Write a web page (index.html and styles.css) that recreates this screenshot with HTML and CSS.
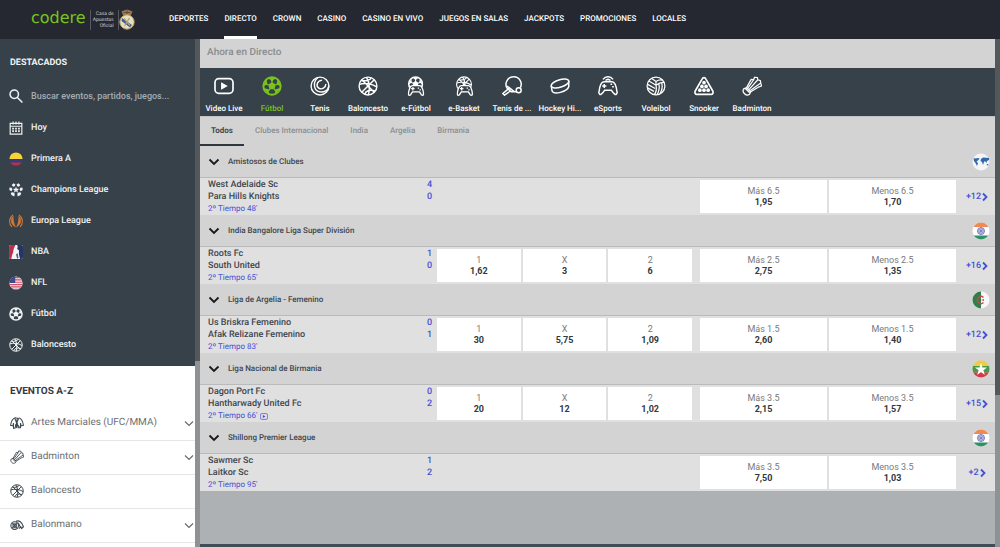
FILE: index.html
```html
<!DOCTYPE html>
<html lang="es">
<head>
<meta charset="utf-8">
<meta name="viewport" content="width=device-width, initial-scale=1">
<title>Codere - Directo</title>
<link rel="stylesheet" href="styles.css">
</head>
<body>
<svg class="sprite" aria-hidden="true">
  <symbol id="ball" viewBox="0 0 24 24"><circle cx="12" cy="12" r="10.4" fill="none" stroke="currentColor" stroke-width="2.400"/><path d="M12 7.200l4.600 3.300-1.800 5.400H9.200l-1.800-5.400z" fill="currentColor"/><path d="M12 8V3M16 10.700l5-1.700M14.500 15.500l3 4M9.500 15.500l-3 4M8 10.700L3 9" stroke="currentColor" stroke-width="1.500"/><path d="M7 2h10l-5 4.500zM18.500 4l4.500 9-5.500-3zM22.500 14.500l-7 8 .5-6.500zM1.500 14.500l7 8-.5-6.500zM5.500 4L1 13l5.500-3z" fill="currentColor"/></symbol>
  <symbol id="basket" viewBox="0 0 24 24"><g fill="none" stroke="currentColor" stroke-width="1.700"><circle cx="12" cy="12" r="10.700"/><path d="M4.500 4.500l15 15M19.500 4.500l-15 15M10 1.500c4 6 4 15 2.500 21M1.500 10c6-2 15-1 21 3M4 5.500c6 1 11-1 12-3.500M8 22c1-4 6-6 12.500-4"/></g></symbol>
  <symbol id="shuttle" viewBox="0 0 24 24"><g fill="none" stroke="currentColor" stroke-width="1.500" stroke-linejoin="round"><path d="M5.500 14L11 4l3 .5L15 1.500l3.500.5.500 2.500 3 1 .5 3 1 3.500-3 1L10.500 19z"/><path d="M7 14.500L14 4.500M8.500 16L19 4.500M10 17.500L22.500 8.500"/><path d="M5.500 14l5 5-1.500 3c-4 3-9.500-2.500-7-6.500zM4 15l5 5"/></g></symbol>
  <symbol id="pad" viewBox="0 0 24 24"><path d="M7 9h10c3 0 5 4 6 12 0 2.500-3 2.500-4 0l-2-3H7l-2 3c-1 2.500-4 2.500-4 0C2 13 4 9 7 9z" stroke="currentColor" stroke-width="2"/><path d="M5 13.500h5M7.500 11v5M14.500 12.500h2M17 15h2" stroke="currentColor" stroke-width="1.800"/></symbol>
  <symbol id="down" viewBox="0 0 12 12"><path d="M1.500 3.500L6 8l4.500-4.500" fill="none" stroke="currentColor" stroke-width="1.800"/></symbol>
  <symbol id="thin-down" viewBox="0 0 12 12"><path d="M2 4.500l4 4 4-4" fill="none" stroke="currentColor" stroke-width="1.100"/></symbol>
  <symbol id="right" viewBox="0 0 8 10"><path d="M2 1.500L5.500 5 2 8.500" fill="none" stroke="currentColor" stroke-width="1.800"/></symbol>
  <symbol id="play" viewBox="0 0 24 20"><rect x="1.200" y="1.200" width="21.600" height="17.600" rx="4.500" fill="none" stroke="currentColor" stroke-width="2"/><path d="M8.500 5.500v9l8-4.500z" fill="currentColor"/></symbol>
  <symbol id="india" viewBox="0 0 18 18"><clipPath id="round"><circle cx="9" cy="9" r="8.500"/></clipPath><g clip-path="url(#round)"><path fill="#fff" d="M0 0h18v18H0z"/><path fill="#f08a50" d="M0 0h18v5H0z"/><path fill="#2f9264" d="M0 13.500h18V18H0z"/></g><circle cx="9" cy="9" r="3.500" fill="#c9cbea" stroke="#6468b0" stroke-width=".8"/><path d="M9 5.500v7M5.500 9h7M6.500 6.500l5 5M11.500 6.500l-5 5" stroke="#6468b0" stroke-width=".5"/></symbol>
</svg>

<header class="topbar">
  <a class="brand" href="#">
    <span class="brand-name">codere</span>
    <span class="brand-note">Casa de<br>Apuestas<br>Oficial</span>
    <svg class="crest" viewBox="0 0 16 21" aria-hidden="true"><path d="M4 6L2.500 2.500 5 1.500 8 .5l3 1 2.500 1L12 6z" fill="#9a7b48"/><path d="M4.500 3.500h7M8 1v4" stroke="#56404a" stroke-width=".8"/><circle cx="8" cy="13" r="7.200" fill="#e5dfc0" stroke="#b99b58" stroke-width="1"/><path d="M3 9l10 7-2 2.500L2.500 12z" fill="#3b5ca0"/><path d="M5 9.500l6 7M10.500 9l-5 8" stroke="#b4a06a" stroke-width="1.300"/></svg>
  </a>
  <nav class="mainnav">
    <a href="#">Deportes</a><a href="#" class="active">Directo</a><a href="#">Crown</a><a href="#">Casino</a><a href="#">Casino en vivo</a><a href="#">Juegos en salas</a><a href="#">Jackpots</a><a href="#">Promociones</a><a href="#">Locales</a>
  </nav>
</header>

<div class="layout">
  <aside class="sidebar">
    <section class="featured">
      <h2>DESTACADOS</h2>
      <label class="search"><svg class="side-icon" viewBox="0 0 24 24" role="img" aria-label="Buscar"><g fill="none" stroke="currentColor" stroke-width="2.600"><circle cx="9" cy="9" r="7.200"/><path d="M14 14l9 9"/></g></svg><input type="search" placeholder="Buscar eventos, partidos, juegos..."></label>
      <ul>
        <li><a href="#"><svg class="side-icon" viewBox="0 0 24 24"><path d="M2 4h20v18.500H2zM2 9h20M7 1v5M12 1v5M17 1v5" fill="none" stroke="currentColor" stroke-width="2"/><path d="M5.500 13h13M5.500 17.500h13" stroke="currentColor" stroke-width="3" stroke-dasharray="3 2"/></svg>Hoy</a></li>
        <li><a href="#"><svg class="side-icon" viewBox="0 0 18 18"><g clip-path="url(#round)"><path fill="#f8d238" d="M0 0h18v9H0z"/><path fill="#303c88" d="M0 9h18v4.500H0z"/><path fill="#b93348" d="M0 13.500h18V18H0z"/></g></svg>Primera A</a></li>
        <li><a href="#"><svg class="side-icon" viewBox="0 0 24 24" fill="currentColor"><path d="M12 6l1.500 4h4l-3 2.500 1 4-3.500-2.300L8.500 16.500l1-4-3-2.500h4z"/><path d="M8 .5l3 2-1 3-3 1-2.500-3zM16 .5l3.500 3-2.500 3-3-1-1-3zM1 7.500l3.500.5 1.500 3-2 3-3.500-2zM23 7.500l-3.500.5-1.500 3 2 3 3.500-2zM3 16.500l4-.5 3 2.500L9 23l-5-2.500zM21 16.500l-4-.5-3 2.500 1 4.500 5-2.500z"/></svg>Champions League</a></li>
        <li><a href="#"><svg class="side-icon europa" viewBox="0 0 24 24"><path d="M7 1.500C0 6-1 16 5 22M17 1.500c7 4.500 8 14.500 2 20.500" fill="none" stroke="currentColor" stroke-width="1.800"/><path d="M7 4c0 7 1 12 4 18C3 18 2 10 7 4zM17 4c0 7-1 12-4 18 8-4 9-12 4-18z" fill="currentColor" stroke="currentColor"/></svg>Europa League</a></li>
        <li><a href="#"><svg class="side-icon" viewBox="0 0 24 24"><rect width="24" height="24" rx="3" fill="#f5f5f8"/><path d="M3 0h8L8 7l-1 6-2 5-1 6H3a3 3 0 0 1-3-3V3a3 3 0 0 1 3-3z" fill="#b83148"/><path d="M14 0h7a3 3 0 0 1 3 3v18a3 3 0 0 1-3 3h-2l-2-8V9l-3-2 1-4z" fill="#263566"/><path d="M12 16l3-2 1 7-2 3z" fill="#56617f"/></svg>NBA</a></li>
        <li><a href="#"><svg class="side-icon" viewBox="0 0 18 18"><g clip-path="url(#round)"><path fill="#f2e9ed" d="M0 0h18v18H0z"/><path d="M0 2h18M0 5h18M0 8h18M0 11h18M0 14h18M0 17h18" stroke="#cd5269" stroke-width="1.500"/><path fill="#3d4c8c" d="M0 0h8v9H0z"/></g></svg>NFL</a></li>
        <li><a href="#"><svg class="side-icon"><use href="#ball"/></svg>Fútbol</a></li>
        <li><a href="#"><svg class="side-icon"><use href="#basket"/></svg>Baloncesto</a></li>
      </ul>
    </section>
    <section class="events-az">
      <h2>EVENTOS A-Z</h2>
      <ul>
        <li><a href="#"><svg class="side-icon" viewBox="0 0 24 24"><path d="M9 3C5 4 2 9 1 16l4 1 1-5v9l5-1V9l2-5zM15 3c4 1 7 6 8 13l-4 1-1-5v8h-4l-3-11" fill="none" stroke="currentColor" stroke-width="1.800"/><path d="M8 4l6 13M15 4l-4 9M10 14l-1 6M12 14l4 5" stroke="currentColor" stroke-width="1.800"/></svg><span>Artes Marciales (UFC/MMA)</span><svg class="expand"><use href="#thin-down"/></svg></a></li>
        <li><a href="#"><svg class="side-icon"><use href="#shuttle"/></svg><span>Badminton</span><svg class="expand"><use href="#thin-down"/></svg></a></li>
        <li><a href="#"><svg class="side-icon"><use href="#basket"/></svg><span>Baloncesto</span></a></li>
        <li><a href="#"><svg class="side-icon" viewBox="0 0 24 24"><g fill="none" stroke="currentColor" stroke-width="1.900"><circle cx="8" cy="13" r="6.500"/><circle cx="8" cy="13" r="3"/><path d="M10 6c5-3 11 1 13 9l-3 3-2-4M14 8l4 8-3 2M4 9l8 8M12 9l-8 8"/></g></svg><span>Balonmano</span><svg class="expand"><use href="#thin-down"/></svg></a></li>
      </ul>
    </section>
  </aside>
  <div class="scroll"><div class="thumb thumb-side"></div></div>

  <main class="content">
    <h1>Ahora en Directo</h1>
    <nav class="sports">
      <a href="#"><svg><use href="#play"/></svg>Video Live</a>
      <a href="#" class="active"><svg><use href="#ball"/></svg>Fútbol</a>
      <a href="#"><svg viewBox="0 0 24 24"><g fill="none" stroke="currentColor" stroke-width="1.700"><circle cx="12" cy="12" r="10.700"/><path d="M10 1.500C3.500 6 4 16 10 18.500c6 2 12-1 12.500-6.500M14.500 5C8 6 7 12 10.500 14.500 14 17 19 14 19 9.500"/></g></svg>Tenis</a>
      <a href="#"><svg><use href="#basket"/></svg>Baloncesto</a>
      <a href="#"><svg viewBox="0 0 24 24"><use href="#ball" x="2" y="0" width="19" height="19"/><use href="#pad" class="pad" x="2" y="4" width="20" height="20"/></svg>e-Fútbol</a>
      <a href="#"><svg viewBox="0 0 24 24"><use href="#basket" x="2" y="0" width="20" height="20"/><use href="#pad" class="pad" x="3" y="4" width="20" height="20"/></svg>e-Basket</a>
      <a href="#"><svg viewBox="0 0 24 24"><g fill="none" stroke="currentColor" stroke-width="1.800"><path d="M7 16C2 10 6 1 14 1c7 0 11 7 8 13M7 16l-6 5 2 2 7-5M7 15l4 4h6M6 12l9 7"/><circle cx="20" cy="17" r="3"/></g></svg>Tenis de ...</a>
      <a href="#"><svg viewBox="0 0 24 24"><g fill="none" stroke="currentColor" stroke-width="1.800"><ellipse cx="12" cy="9" rx="11" ry="4.500" transform="rotate(-17 12 9)"/><path d="M1.500 12l1 6c2 5 18 1 20-5l0-7"/></g></svg>Hockey Hi...</a>
      <a href="#"><svg viewBox="0 0 24 24"><path d="M7 7h10c3 0 5 5 6 13-1 4-4 2-7-3H8c-3 5-6 7-7 3C2 12 4 7 7 7zM6 4c3-4 9-4 12 0M9 5.500c2-2 4-2 6 0" fill="none" stroke="currentColor" stroke-width="1.800"/><path d="M5 12h5M7.500 9.500v5M15 10h2M17 13h2" stroke="currentColor" stroke-width="1.800"/></svg>eSports</a>
      <a href="#"><svg viewBox="0 0 24 24"><g fill="none" stroke="currentColor" stroke-width="1.500"><circle cx="12" cy="12" r="10.700"/><path d="M12 11L3.500 6M12 11c4-3 7-4 10.500-3M12 11c1 5 0 9-2 11.500M2 10l9 5M1.500 14l8 4.500M7 3l5 3.500c3-2 5-2.500 8-1.500M12 6.500V11M15.500 9.500c1 5 0 9-2 12.500M19 8.500c1 5 0 9-2 12"/></g></svg>Voleibol</a>
      <a href="#"><svg viewBox="0 0 24 24"><path d="M12 2c1 0 2 1 2.500 2l8 14c1 2 0 4-2 4h-17c-2 0-3-2-2-4l8-14C10 3 11 2 12 2z" fill="none" stroke="currentColor" stroke-width="2"/><g fill="currentColor"><circle cx="12" cy="8" r="2.200"/><circle cx="9.500" cy="12.500" r="2.200"/><circle cx="14.500" cy="12.500" r="2.200"/><circle cx="7" cy="17" r="2.200"/><circle cx="12" cy="17" r="2.200"/><circle cx="17" cy="17" r="2.200"/></g></svg>Snooker</a>
      <a href="#"><svg><use href="#shuttle"/></svg>Badminton</a>
    </nav>
    <nav class="tabs"><a href="#" class="active">Todos</a><a href="#">Clubes Internacional</a><a href="#">India</a><a href="#">Argelia</a><a href="#">Birmania</a></nav>

    <section class="league">
      <h2><svg class="fold"><use href="#down"/></svg>Amistosos de Clubes<svg class="flag" viewBox="0 0 18 18"><circle cx="9" cy="9" r="8.500" fill="#f3f5f6"/><path d="M1.500 5.500l6-.5-1 2-2 1.500L6 10l-1 3-1.500-3L2 8zM9 6l2-1.500 6 .5v2l-2 1-.5 2-1.500-2-1 1-1 3-1-3-1.500-1zM14.500 11l2 0-.5 2z" fill="#3468a8"/></svg></h2>
      <div class="event">
        <div class="match"><div class="team">West Adelaide Sc<b>4</b></div><div class="team">Para Hills Knights<b>0</b></div><div class="clock">2º Tiempo 48'</div></div>
        <div class="odds result"></div>
        <div class="odds total"><button>Más 6.5<b>1,95</b></button><button>Menos 6.5<b>1,70</b></button></div>
        <a class="more" href="#">+12<svg><use href="#right"/></svg></a>
      </div>
    </section>
    <section class="league">
      <h2><svg class="fold"><use href="#down"/></svg>India Bangalore Liga Super División<svg class="flag"><use href="#india"/></svg></h2>
      <div class="event">
        <div class="match"><div class="team">Roots Fc<b>1</b></div><div class="team">South United<b>0</b></div><div class="clock">2º Tiempo 65'</div></div>
        <div class="odds result"><button>1<b>1,62</b></button><button>X<b>3</b></button><button>2<b>6</b></button></div>
        <div class="odds total"><button>Más 2.5<b>2,75</b></button><button>Menos 2.5<b>1,35</b></button></div>
        <a class="more" href="#">+16<svg><use href="#right"/></svg></a>
      </div>
    </section>
    <section class="league">
      <h2><svg class="fold"><use href="#down"/></svg>Liga de Argelia - Femenino<svg class="flag" viewBox="0 0 18 18"><g clip-path="url(#round)"><path fill="#f8f8f8" d="M0 0h18v18H0z"/><path fill="#2f8048" d="M0 0h9v18H0z"/></g><path d="M11.500 6.500a3.500 3.500 0 1 0 0 5" fill="none" stroke="#cf4550" stroke-width="1.300"/><path d="M9 9l3-1v2z" fill="#cf4550"/></svg></h2>
      <div class="event">
        <div class="match"><div class="team">Us Briskra Femenino<b>0</b></div><div class="team">Afak Relizane Femenino<b>1</b></div><div class="clock">2º Tiempo 83'</div></div>
        <div class="odds result"><button>1<b>30</b></button><button>X<b>5,75</b></button><button>2<b>1,09</b></button></div>
        <div class="odds total"><button>Más 1.5<b>2,60</b></button><button>Menos 1.5<b>1,40</b></button></div>
        <a class="more" href="#">+12<svg><use href="#right"/></svg></a>
      </div>
    </section>
    <section class="league">
      <h2><svg class="fold"><use href="#down"/></svg>Liga Nacional de Birmania<svg class="flag" viewBox="0 0 18 18"><g clip-path="url(#round)"><path fill="#f3cb3c" d="M0 0h18v6H0z"/><path fill="#459c49" d="M0 6h18v6.500H0z"/><path fill="#d8374a" d="M0 12.500h18V18H0z"/></g><path d="M9 3l1.500 4.500h4.500l-3.600 2.700L12.800 15 9 12l-3.800 3 1.400-4.800L3 7.500h4.500z" fill="#fff"/></svg></h2>
      <div class="event">
        <div class="match"><div class="team">Dagon Port Fc<b>0</b></div><div class="team">Hantharwady United Fc<b>2</b></div><div class="clock">2º Tiempo 66'<svg class="live"><use href="#play"/></svg></div></div>
        <div class="odds result"><button>1<b>20</b></button><button>X<b>12</b></button><button>2<b>1,02</b></button></div>
        <div class="odds total"><button>Más 3.5<b>2,15</b></button><button>Menos 3.5<b>1,57</b></button></div>
        <a class="more" href="#">+15<svg><use href="#right"/></svg></a>
      </div>
    </section>
    <section class="league">
      <h2><svg class="fold"><use href="#down"/></svg>Shillong Premier League<svg class="flag"><use href="#india"/></svg></h2>
      <div class="event">
        <div class="match"><div class="team">Sawmer Sc<b>1</b></div><div class="team">Laitkor Sc<b>2</b></div><div class="clock">2º Tiempo 95'</div></div>
        <div class="odds result"></div>
        <div class="odds total"><button>Más 3.5<b>7,50</b></button><button>Menos 3.5<b>1,03</b></button></div>
        <a class="more" href="#">+2<svg><use href="#right"/></svg></a>
      </div>
    </section>
    <div class="page-end"></div>
  </main>
  <div class="scroll"><div class="thumb thumb-main"></div></div>
</div>
</body>
</html>
```
FILE: styles.css
```css
* { box-sizing: border-box; }
body {
  margin: 0;
  height: 100vh;
  overflow: hidden;
  display: flex;
  flex-direction: column;
  background: #adb1b4;
  color: #40464d;
  font: 500 9px/12px Roboto, "Liberation Sans", sans-serif;
  text-rendering: geometricPrecision;
}
a { color: inherit; text-decoration: none; }
ul { list-style: none; margin: 0; padding: 0; }
h1, h2 { margin: 0; font-size: inherit; }
svg { flex: none; display: block; }
.sprite { position: absolute; width: 0; height: 0; }

/* Header */
.topbar { display: flex; flex: none; height: 39px; background: #252830; color: #fff; }
.brand { display: flex; align-items: center; width: 169px; padding-left: 31px; }
.brand-name { color: #7ac31c; font: 16px/20px "DejaVu Sans", sans-serif; padding-bottom: 4px; }
.brand-note {
  margin-left: 4px;
  padding: 1px 4px 1px 2px;
  border: solid #555962;
  border-width: 0 1px;
  color: #c5c7cb;
  font-size: 5px;
  line-height: 6px;
  font-weight: 400;
  text-align: right;
}
.crest { width: 16px; height: 21px; }
.mainnav { display: flex; gap: 16px; font-size: 8px; text-transform: uppercase; }
.mainnav a { display: flex; align-items: center; border-bottom: 3px solid transparent; padding-top: 1px; white-space: nowrap; }
.mainnav .active { border-color: #fff; }

/* Page columns */
.layout { display: grid; grid-template-columns: 195px 5px minmax(0, 1fr) 5px; flex: 1; min-height: 0; }
.scroll { background: #8f9295; }
.thumb { background: #55585b; }
.thumb-side { height: 63.4%; }
.thumb-main { height: 70%; }

/* Sidebar */
.sidebar { display: flex; flex-direction: column; overflow: hidden; background: #fff; }
.side-icon { width: 14px; height: 14px; margin-right: 8px; }
.featured { background: #36414a; color: #f0f2f4; padding-bottom: 6px; }
.featured h2 { padding: 18px 10px 11px; font-weight: 700; }
.search, .featured a { display: flex; align-items: center; height: 31px; padding: 0 9px; }
.search { height: 32px; }
.search input {
  flex: 1;
  min-width: 0;
  padding: 0;
  border: 0;
  outline: 0;
  background: none;
  color: inherit;
  font: inherit;
}
.search input::placeholder { color: #a7adb3; opacity: 1; }
.europa { color: #d27a35; }
.events-az h2 { padding: 20px 10px 9px; color: #36393d; font-size: 10px; font-weight: 700; }
.events-az a { display: flex; align-items: center; height: 34px; padding: 0 0 1px 10px; border-bottom: 1px solid #e6e6e6; color: #3e484f; }
.events-az span { flex: 1; color: #6b6f73; font-size: 10px; font-weight: 400; }
.events-az .side-icon { margin-right: 7px; }
.expand { width: 12px; height: 12px; color: #666; }

/* Main column */
.content { display: flex; flex-direction: column; min-width: 0; }
h1 { padding: 8px 7px 9px; background: #d3d3d3; color: #898c8f; font-size: 10px; font-weight: 500; }
.sports { display: flex; height: 48px; background: #36414a; color: #fff; font-size: 8px; }
.sports a { display: flex; flex-direction: column; align-items: center; gap: 7px; width: 48px; padding-top: 8px; white-space: nowrap; }
.sports svg { width: 20px; height: 20px; }
.sports .active { color: #7ac31c; }
.pad { fill: #36414a; }
.tabs { display: flex; background: #d3d3d3; border-top: 1px solid #c2c3c4; color: #8b8e91; font-size: 8px; }
.tabs a { padding: 8px 11px 7px; border-bottom: 2px solid transparent; }
.tabs .active { color: #454a50; border-color: #30383f; font-weight: 700; }

/* Leagues */
.league h2 {
  display: flex;
  align-items: center;
  height: 32px;
  padding: 0 5px 0 8px;
  background: #d3d3d3;
  border-bottom: 1px solid #b9babb;
  font-size: 8px;
  font-weight: 500;
}
.fold { width: 12px; height: 12px; margin-right: 8px; color: #16191c; }
.flag { width: 18px; height: 18px; margin-left: auto; }
.event { display: grid; grid-template-columns: 237fr 255fr 264fr 39px; height: 37px; background: #e0e0e0; }
.match { padding: 1px 5px 0 8px; font-size: 9px; }
.team { display: flex; justify-content: space-between; }
.team b { font-size: 9px; font-weight: 500; color: #454ed5; }
.clock { display: flex; align-items: center; gap: 3px; color: #454ed5; font-size: 8px; font-weight: 400; }
.live { width: 8px; height: 7px; }
.odds { display: flex; gap: 2px; padding: 2px 0; }
.total { padding-left: 8px; }
.odds button {
  flex: 1;
  display: flex;
  flex-direction: column;
  justify-content: center;
  align-items: center;
  padding: 0;
  border: 0;
  background: #fff;
  color: #77797c;
  font: 400 9px/11px Roboto, "Liberation Sans", sans-serif;
}
.odds b { color: #33383d; font-weight: 700; }
.more { display: flex; align-items: center; justify-content: center; padding-left: 4px; color: #454ed5; font-size: 9px; }
.more svg { width: 8px; height: 10px; }
.page-end { height: 3px; margin-top: auto; background: #434d56; }
```
